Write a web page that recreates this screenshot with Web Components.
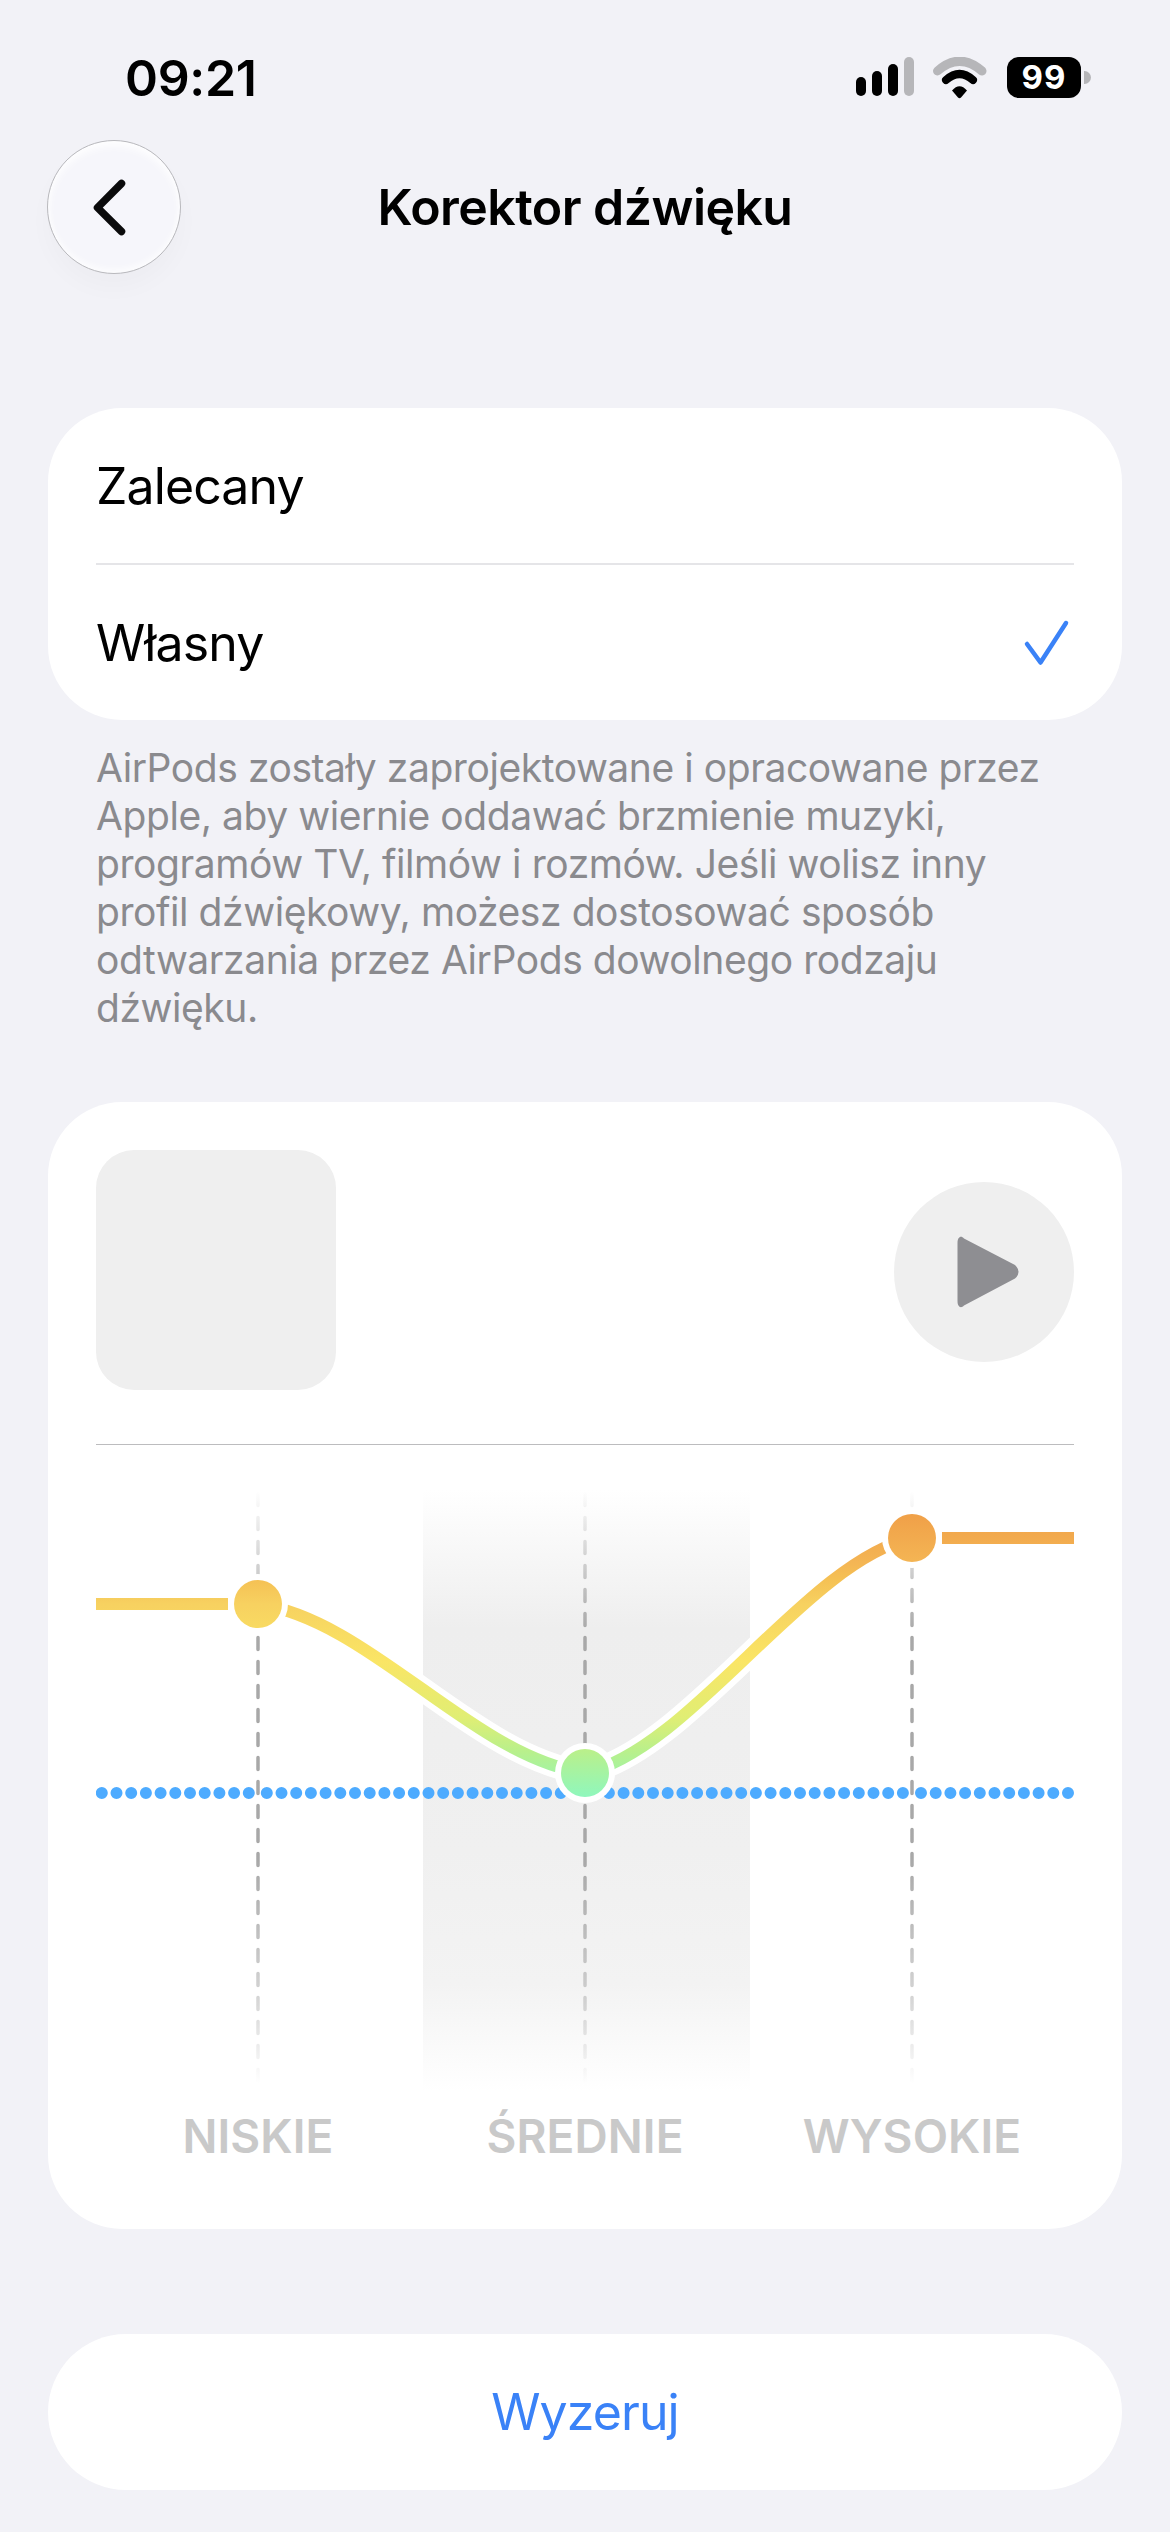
<!DOCTYPE html>
<html lang="pl">
<head>
<meta charset="utf-8">
<title>Korektor dźwięku</title>
<style>
  html, body { margin: 0; background: #f2f2f7; }
  body { width: 1170px; height: 2532px; overflow: hidden; font-family: Inter, "Noto Sans", sans-serif; }
</style>
</head>
<body>
<ios-screen>
  <status-bar time="09:21" battery="99"></status-bar>
  <nav-header>Korektor dźwięku</nav-header>
  <option-list>
    <option-row>Zalecany</option-row>
    <option-row checked>Własny</option-row>
  </option-list>
  <foot-note>AirPods zostały zaprojektowane i opracowane przez Apple, aby wiernie oddawać brzmienie muzyki, programów TV, filmów i rozmów. Jeśli wolisz inny profil dźwiękowy, możesz dostosować sposób odtwarzania przez AirPods dowolnego rodzaju dźwięku.</foot-note>
  <eq-card>
    <eq-chart></eq-chart>
  </eq-card>
  <reset-button>Wyzeruj</reset-button>
</ios-screen>

<script>
class BaseElement extends HTMLElement {
  constructor() {
    super();
    this.attachShadow({ mode: "open" });
  }

  connectedCallback() {
    this.shadowRoot.innerHTML = `<style>${this.getStyles()}</style>${this.getTemplate()}`;
  }
}

class IosScreen extends BaseElement {
  getStyles() {
    return `
      :host { display: flex; flex-direction: column; width: 1170px; height: 2532px; color: #000; }
    `;
  }
  getTemplate() { return `<slot></slot>`; }
}

class StatusBar extends BaseElement {
  getStyles() {
    return `
      :host { display: flex; justify-content: space-between; align-items: flex-start; height: 140px; padding: 0 89px 0 125px; box-sizing: border-box; }
      .time { font-size: 50px; font-weight: 600; line-height: 52px; margin-top: 52px; letter-spacing: -0.3px; }
      .icons { display: flex; align-items: flex-start; margin-top: 57px; }
      svg { display: block; }
      .battery { position: relative; width: 74px; height: 41px; margin-left: 20px; background: #000; border-radius: 12px; color: #fff;
        font-size: 33px; font-weight: 700; line-height: 41px; text-align: center; letter-spacing: 1px; }
      .battery::after { content: ""; position: absolute; left: 77px; top: 14px; width: 7px; height: 13px; background: #b5b5b8; border-radius: 0 7px 7px 0; }
    `;
  }
  getTemplate() {
    return `
      <div class="time">${this.getAttribute("time")}</div>
      <div class="icons">
        <svg width="131" height="42" viewBox="856 57 131 42" fill="none">
          <rect x="856" y="77" width="10" height="19" rx="5" fill="#000"/>
          <rect x="872" y="71" width="10" height="25" rx="5" fill="#000"/>
          <rect x="888" y="64" width="10" height="32" rx="5" fill="#000"/>
          <rect x="904" y="57" width="10" height="39" rx="5" fill="#b6b6b9"/>
          <path d="M937.5 71 Q959.5 51.500 982 71" stroke="#b6b6b9" stroke-width="9" stroke-linecap="round"/>
          <path d="M946 80 Q959.500 68 973 80" stroke="#000" stroke-width="8" stroke-linecap="round"/>
          <path d="M952 90.500 Q959.500 82 967 90.500 L961 97.500 Q959.500 99 958 97.500 Z" fill="#000"/>
        </svg>
        <div class="battery">${this.getAttribute("battery")}</div>
      </div>
    `;
  }
}

class NavHeader extends BaseElement {
  getStyles() {
    return `
      :host { display: block; position: relative; height: 134px; }
      .back { position: absolute; left: 47px; top: 0; width: 134px; height: 134px; box-sizing: border-box; border-radius: 50%;
        background: #f6f6fb; border: 1.5px solid #b9b9bd;
        box-shadow: inset 0 5px 8px rgba(255,255,255,.9), inset 0 -4px 6px rgba(255,255,255,.7), 0 14px 24px rgba(0,0,0,.025); }
      .back svg { position: absolute; left: -1.5px; top: -1.5px; display: block; }
      .title { font-size: 50px; font-weight: 600; line-height: 134px; text-align: center; letter-spacing: -0.55px; }
    `;
  }
  getTemplate() {
    return `
      <div class="back">
        <svg width="134" height="134" viewBox="47 140 134 134" fill="none">
          <path d="M121.500 183.500 L97.500 207.700 L121.500 231.500" stroke="#0b0b0c" stroke-width="7.500" stroke-linecap="round" stroke-linejoin="round"/>
        </svg>
      </div>
      <div class="title"><slot></slot></div>
    `;
  }
}

class OptionList extends BaseElement {
  getStyles() {
    return `
      :host { display: flex; flex-direction: column; margin: 134px 48px 0; height: 312px; background: #fff; border-radius: 74px; }
      ::slotted(option-row:first-child) { border-bottom: 2.500px solid #e5e5e8; }
    `;
  }
  getTemplate() { return `<slot></slot>`; }
}

class OptionRow extends BaseElement {
  getStyles() {
    return `
      :host { display: flex; flex: 1; align-items: center; justify-content: space-between; margin: 0 48px; font-size: 50px; letter-spacing: -0.9px; }
      svg { display: block; margin-right: 3px; }
    `;
  }
  getTemplate() {
    const check = this.hasAttribute("checked")
      ? `<svg width="48" height="48" viewBox="0 0 48 48" fill="none"><path d="M4 25 L17.500 43.500 L43 4" stroke="#3a82f7" stroke-width="4.500" stroke-linecap="round" stroke-linejoin="round"/></svg>`
      : "";
    return `<slot></slot>${check}`;
  }
}

class FootNote extends BaseElement {
  getStyles() {
    return `
      :host { display: block; margin: 24px 96px 0; height: 288px; font-size: 39px; line-height: 48px; color: #8a8a8e; letter-spacing: -0.43px; }
    `;
  }
  getTemplate() { return `<slot></slot>`; }
}

class EqCard extends BaseElement {
  getStyles() {
    return `
      :host { display: block; margin: 70px 48px 0; height: 1127px; padding: 48px 48px 0; box-sizing: border-box; background: #fff; border-radius: 74px; }
      .media { display: flex; align-items: flex-start; justify-content: space-between; height: 240px; padding-bottom: 54px; border-bottom: 1px solid #bcbcbe; }
      .artwork { width: 240px; height: 240px; background: #efefef; border-radius: 38px; }
      .play { display: flex; align-items: center; justify-content: center; width: 180px; height: 180px; margin-top: 32px; border-radius: 50%; background: #efefef; }
      svg { display: block; }
    `;
  }
  getTemplate() {
    return `
      <div class="media">
        <div class="artwork"></div>
        <div class="play">
          <svg width="180" height="180" viewBox="894 1182 180 180" fill="#8e8e92">
            <path d="M957.500 1243 C957.500 1237 961 1235 964 1238.500 L1015 1265 Q1022 1272 1015 1278.500 L964 1305.500 C961 1309 957.500 1307 957.500 1301 Z"/>
          </svg>
        </div>
      </div>
      <slot></slot>
    `;
  }
}

class EqChart extends BaseElement {
  getStyles() {
    return `
      :host { display: block; margin-top: 35px; }
      svg { display: block; }
      .labels { display: grid; grid-template-columns: repeat(3, 327px); margin: 18px -1.5px 0; }
      .labels span { text-align: center; font-size: 46px; font-weight: 600; line-height: 56px; color: #c9c9c9; letter-spacing: 0.1px; white-space: nowrap; }
    `;
  }
  dots(from, to) {
    return `<path d="M${from} 1793 H${to + 1}" />`;
  }
  getTemplate() {
    // drawn in page coordinates, the viewBox maps them into the card
    const guides = [258, 585, 912]
      .map((x) => `<path d="M${x} 1493.500 V2084"/>`)
      .join("");
    return `
      <svg width="978" height="610" viewBox="96 1480 978 610" fill="none">
        <defs>
          <linearGradient id="band" gradientUnits="userSpaceOnUse" x1="0" y1="1490" x2="0" y2="2092">
            <stop offset="0" stop-color="#eeeeee" stop-opacity="0"/>
            <stop offset=".23" stop-color="#eeeeee"/>
            <stop offset=".6" stop-color="#f0f0f0"/>
            <stop offset=".82" stop-color="#f3f3f3"/>
            <stop offset="1" stop-color="#f3f3f3" stop-opacity="0"/>
          </linearGradient>
          <linearGradient id="guide" gradientUnits="userSpaceOnUse" x1="0" y1="1491" x2="0" y2="2084">
            <stop offset="0" stop-color="#a8a8a8" stop-opacity="0"/>
            <stop offset=".24" stop-color="#a8a8a8"/>
            <stop offset=".62" stop-color="#a8a8a8"/>
            <stop offset=".85" stop-color="#a8a8a8" stop-opacity=".5"/>
            <stop offset="1" stop-color="#a8a8a8" stop-opacity="0"/>
          </linearGradient>
          <linearGradient id="curve" gradientUnits="userSpaceOnUse" x1="0" y1="1514" x2="0" y2="1797">
            <stop offset="0" stop-color="#f0a048"/>
            <stop offset=".17" stop-color="#f4b554"/>
            <stop offset=".233" stop-color="#f5c154"/>
            <stop offset=".318" stop-color="#f7d160"/>
            <stop offset=".4" stop-color="#f8da62"/>
            <stop offset=".52" stop-color="#fae565"/>
            <stop offset=".72" stop-color="#e0ee74"/>
            <stop offset=".84" stop-color="#b8f08c"/>
            <stop offset="1" stop-color="#8ff7bd"/>
          </linearGradient>
        </defs>
        <rect x="423" y="1490" width="327" height="602" fill="url(#band)"/>
        <g stroke="url(#guide)" stroke-width="3.500" stroke-dasharray="12 12" stroke-linecap="round">${guides}</g>
        <g stroke="#4dabff" stroke-width="12" stroke-linecap="round" stroke-dasharray="0 14.7">
          ${this.dots(101.8, 249)}${this.dots(266.8, 576)}${this.dots(594.2, 903)}${this.dots(921, 1068)}
        </g>
        <path d="M258 1604 C370 1620 473 1757 585 1773 C690 1750 807 1561 912 1538" stroke="#fff" stroke-width="24"/>
        <g stroke="url(#curve)" stroke-width="12">
          <path d="M96 1604 H228"/>
          <path d="M942 1538 H1074"/>
          <path d="M258 1604 C370 1620 473 1757 585 1773 C690 1750 807 1561 912 1538"/>
        </g>
        <g fill="#fff">
          <circle cx="258" cy="1604" r="30"/><circle cx="585" cy="1773" r="30"/><circle cx="912" cy="1538" r="30"/>
        </g>
        <g fill="url(#curve)">
          <circle cx="258" cy="1604" r="24"/><circle cx="585" cy="1773" r="24"/><circle cx="912" cy="1538" r="24"/>
        </g>
      </svg>
      <div class="labels"><span>NISKIE</span><span>ŚREDNIE</span><span>WYSOKIE</span></div>
    `;
  }
}

class ResetButton extends BaseElement {
  getStyles() {
    return `
      :host { display: flex; align-items: center; justify-content: center; margin: 105px 48px 0; height: 156px; background: #fff; border-radius: 78px;
        font-size: 50px; color: #3a82f7; letter-spacing: -0.9px; }
    `;
  }
  getTemplate() { return `<slot></slot>`; }
}

customElements.define("ios-screen", IosScreen);
customElements.define("status-bar", StatusBar);
customElements.define("nav-header", NavHeader);
customElements.define("option-list", OptionList);
customElements.define("option-row", OptionRow);
customElements.define("foot-note", FootNote);
customElements.define("eq-card", EqCard);
customElements.define("eq-chart", EqChart);
customElements.define("reset-button", ResetButton);
</script>
</body>
</html>
